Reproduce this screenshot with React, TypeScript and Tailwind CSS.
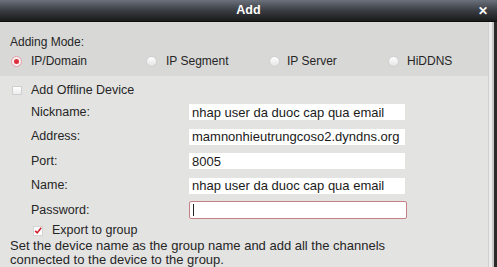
const FONT = "font-['Liberation_Sans',Arial,sans-serif]"

function Radio({ checked }: { checked?: boolean }) {
  return (
    <span
      className={
        checked
          ? 'flex h-[11px] w-[11px] shrink-0 items-center justify-center rounded-full border border-[#e0a0a8] bg-[#fbeef0]'
          : 'h-[11px] w-[11px] shrink-0 rounded-full border border-[#cfcfcf] bg-gradient-to-b from-[#ffffff] to-[#e4e4e4]'
      }
    >
      {checked && <span className="h-[5px] w-[5px] rounded-full bg-[#d8303c]" />}
    </span>
  )
}

function Field({ label, value, active }: { label: string; value?: string; active?: boolean }) {
  return (
    <div className="flex h-[24.5px] items-center">
      <span className="w-[189px] pl-[31px] text-[12.5px]">{label}</span>
      {active ? (
        <div className="flex h-[18px] w-[218px] items-center rounded-[2px] border border-[#c77f86] bg-white px-[3px]">
          <span className="h-[12px] w-px bg-[#222]" />
        </div>
      ) : (
        <div className="flex h-[16px] w-[216px] items-center bg-white px-[3px] text-[13px] text-[#1a1a1a]">{value}</div>
      )}
    </div>
  )
}

export default function App() {
  return (
    <div className={`${FONT} flex h-[267px] w-[497px] flex-col overflow-hidden text-[12px] text-[#262626]`}>
      {/* title bar */}
      <div className="grid h-[22px] shrink-0 grid-cols-[1fr_auto_1fr] items-center border-b border-[#0e0e0e] bg-gradient-to-b from-[#6b717c] via-[#3a3d43] to-[#1b1b1b]">
        <span />
        <span className="text-[12.5px] font-bold text-white">Add</span>
        <span className="pr-[9px] text-right text-[12px] font-bold leading-none text-white">✕</span>
      </div>

      <div className="flex flex-1">
        <div className="flex flex-1 flex-col">
          {/* adding mode */}
          <div className="h-[54px] bg-[#d8d8d7] px-[10px] pt-[13px]">
            <div className="leading-[14px]">Adding Mode:</div>
            <div className="mt-[3px] flex h-[18px] items-center">
              <div className="flex w-[136px] items-center gap-[9px] pl-[1px]">
                <Radio checked />
                <span>IP/Domain</span>
              </div>
              <div className="flex w-[123px] items-center gap-[9px]">
                <Radio />
                <span>IP Segment</span>
              </div>
              <div className="flex w-[119px] items-center gap-[7px]">
                <Radio />
                <span>IP Server</span>
              </div>
              <div className="flex items-center gap-[8px]">
                <Radio />
                <span>HiDDNS</span>
              </div>
            </div>
          </div>

          {/* device form */}
          <div className="flex-1 bg-[#e3e3e2] pt-[4px]">
            <div className="flex h-[20px] items-center gap-[9px] pl-[12px]">
              <span className="h-[9px] w-[10px] border border-[#d0d0d0] bg-gradient-to-b from-white to-[#ececec]" />
              <span className="text-[12.5px]">Add Offline Device</span>
            </div>
            <Field label="Nickname:" value="nhap user da duoc cap qua email" />
            <Field label="Address:" value="mamnonhieutrungcoso2.dyndns.org" />
            <Field label="Port:" value="8005" />
            <Field label="Name:" value="nhap user da duoc cap qua email" />
            <Field label="Password:" active />
            <div className="flex h-[16px] items-center gap-[9px] pl-[33px]">
              <span className="flex h-[10px] w-[10px] items-center justify-center border border-[#d4d4d4] bg-white">
                <svg width="10" height="9" viewBox="0 0 10 9">
                  <path d="M1.5 5 L4 7.5 L9 1" fill="none" stroke="#d0202c" strokeWidth="2" />
                </svg>
              </span>
              <span className="text-[12.5px]">Export to group</span>
            </div>
            <p className="pl-[10px] text-[13px] leading-[14px]">
              Set the device name as the group name and add all the channels
              <br />
              connected to the device to the group.
            </p>
          </div>
        </div>

        {/* right edge */}
        <div className="flex w-[9px] shrink-0">
          <div className="w-[4px] border-l border-[#d0d0d0] bg-[#ececec]" />
          <div className="w-[2px] bg-[#c8c8c8]" />
          <div className="flex-1 bg-[#2a2a2a]" />
        </div>
      </div>
    </div>
  )
}
